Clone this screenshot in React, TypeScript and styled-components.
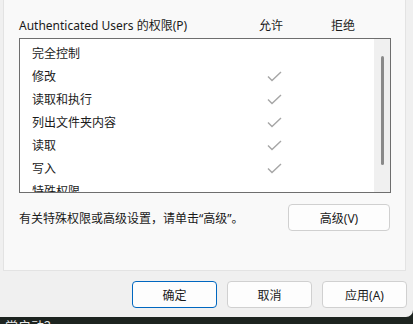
import React from 'react';
import styled, { createGlobalStyle } from 'styled-components';

const GlobalStyle = createGlobalStyle`
  html, body {
    margin: 0;
    padding: 0;
    background: #1d2420;
  }
  body {
    font-family: "Segoe UI", "Noto Sans", "Noto Sans CJK SC", sans-serif;
    font-size: 12px;
    color: #1a1a1a;
  }
`;

const Window = styled.div`
  width: 413px;
  height: 317px;
  background: #f0f0f0;
  border-bottom-right-radius: 7px;
  display: flex;
  flex-direction: column;
  box-sizing: border-box;
`;

const Panel = styled.div`
  margin-left: 3px;
  width: 403px;
  height: 271px;
  box-sizing: border-box;
  background: #f9f9f9;
  border: 1px solid #e3e3e3;
  border-top: none;
  padding: 18px 14px 0 15px;
  display: flex;
  flex-direction: column;
`;

const HeaderRow = styled.div`
  display: grid;
  grid-template-columns: 1fr 72px 72px;
  padding-right: 12px;
  height: 16px;
  line-height: 16px;
  margin-bottom: 4px;
`;

const ColHead = styled.span`
  text-align: center;
`;

const ListBox = styled.div`
  height: 155px;
  box-sizing: border-box;
  border: 1px solid #6e6e6e;
  background: #ffffff;
  display: flex;
  overflow: hidden;
`;

const Rows = styled.div`
  flex: 1;
  padding-top: 3px;
`;

const Row = styled.div`
  display: grid;
  grid-template-columns: 1fr 72px 64px;
  height: 23px;
  line-height: 23px;
  padding-left: 12px;
  align-items: center;
`;

const CheckCell = styled.span`
  display: flex;
  justify-content: center;
  align-items: center;
  height: 23px;
`;

const ScrollTrack = styled.div`
  width: 16px;
  background: #f0f0f0;
  display: flex;
  justify-content: center;
  padding-top: 17px;
  box-sizing: border-box;
`;

const ScrollThumb = styled.div`
  width: 3px;
  height: 109px;
  border-radius: 1.5px;
  background: #8a8a8a;
  margin-left: 1px;
`;

const NoteRow = styled.div`
  margin-top: 11px;
  display: flex;
  align-items: center;
  justify-content: space-between;
  padding-right: 1px;
`;

const Button = styled.button<{ $primary?: boolean; $width?: number }>`
  width: ${(p) => p.$width ?? 85}px;
  height: 27px;
  box-sizing: border-box;
  border-radius: 4px;
  border: 1px solid ${(p) => (p.$primary ? '#0067c0' : '#d0d0d0')};
  background: #fdfdfd;
  font-family: inherit;
  font-size: 12px;
  color: #1a1a1a;
  padding: 0;
`;

const Footer = styled.div`
  display: flex;
  justify-content: flex-end;
  gap: 10px;
  padding: 10px 6px 0 0;
`;

const Taskbar = styled.div`
  height: 7px;
  overflow: hidden;
  background: #1d2420;
  color: #e8e8e8;
  font-size: 13px;
  line-height: 17px;
  white-space: nowrap;
  padding-left: 5px;
  font-family: "Noto Sans CJK SC", sans-serif;
`;

const Check = () => (
  <svg width="15" height="11" viewBox="0 0 15 11">
    <path d="M1 5.5 L5 9.5 L14 1" fill="none" stroke="#a6a6a6" strokeWidth="1.4" />
  </svg>
);

const permissions: { name: string; allow: boolean }[] = [
  { name: '完全控制', allow: false },
  { name: '修改', allow: true },
  { name: '读取和执行', allow: true },
  { name: '列出文件夹内容', allow: true },
  { name: '读取', allow: true },
  { name: '写入', allow: true },
  { name: '特殊权限', allow: false },
];

export default function App() {
  return (
    <>
      <GlobalStyle />
      <Window>
        <Panel>
          <HeaderRow>
            <span>Authenticated Users 的权限(P)</span>
            <ColHead>允许</ColHead>
            <ColHead>拒绝</ColHead>
          </HeaderRow>
          <ListBox>
            <Rows>
              {permissions.map((p) => (
                <Row key={p.name}>
                  <span>{p.name}</span>
                  <CheckCell>{p.allow && <Check />}</CheckCell>
                  <CheckCell />
                </Row>
              ))}
            </Rows>
            <ScrollTrack>
              <ScrollThumb />
            </ScrollTrack>
          </ListBox>
          <NoteRow>
            <span>有关特殊权限或高级设置，请单击“高级”。</span>
            <Button $width={102}>高级(V)</Button>
          </NoteRow>
        </Panel>
        <Footer>
          <Button $primary>确定</Button>
          <Button>取消</Button>
          <Button>应用(A)</Button>
        </Footer>
      </Window>
      <Taskbar>常启动？</Taskbar>
    </>
  );
}
